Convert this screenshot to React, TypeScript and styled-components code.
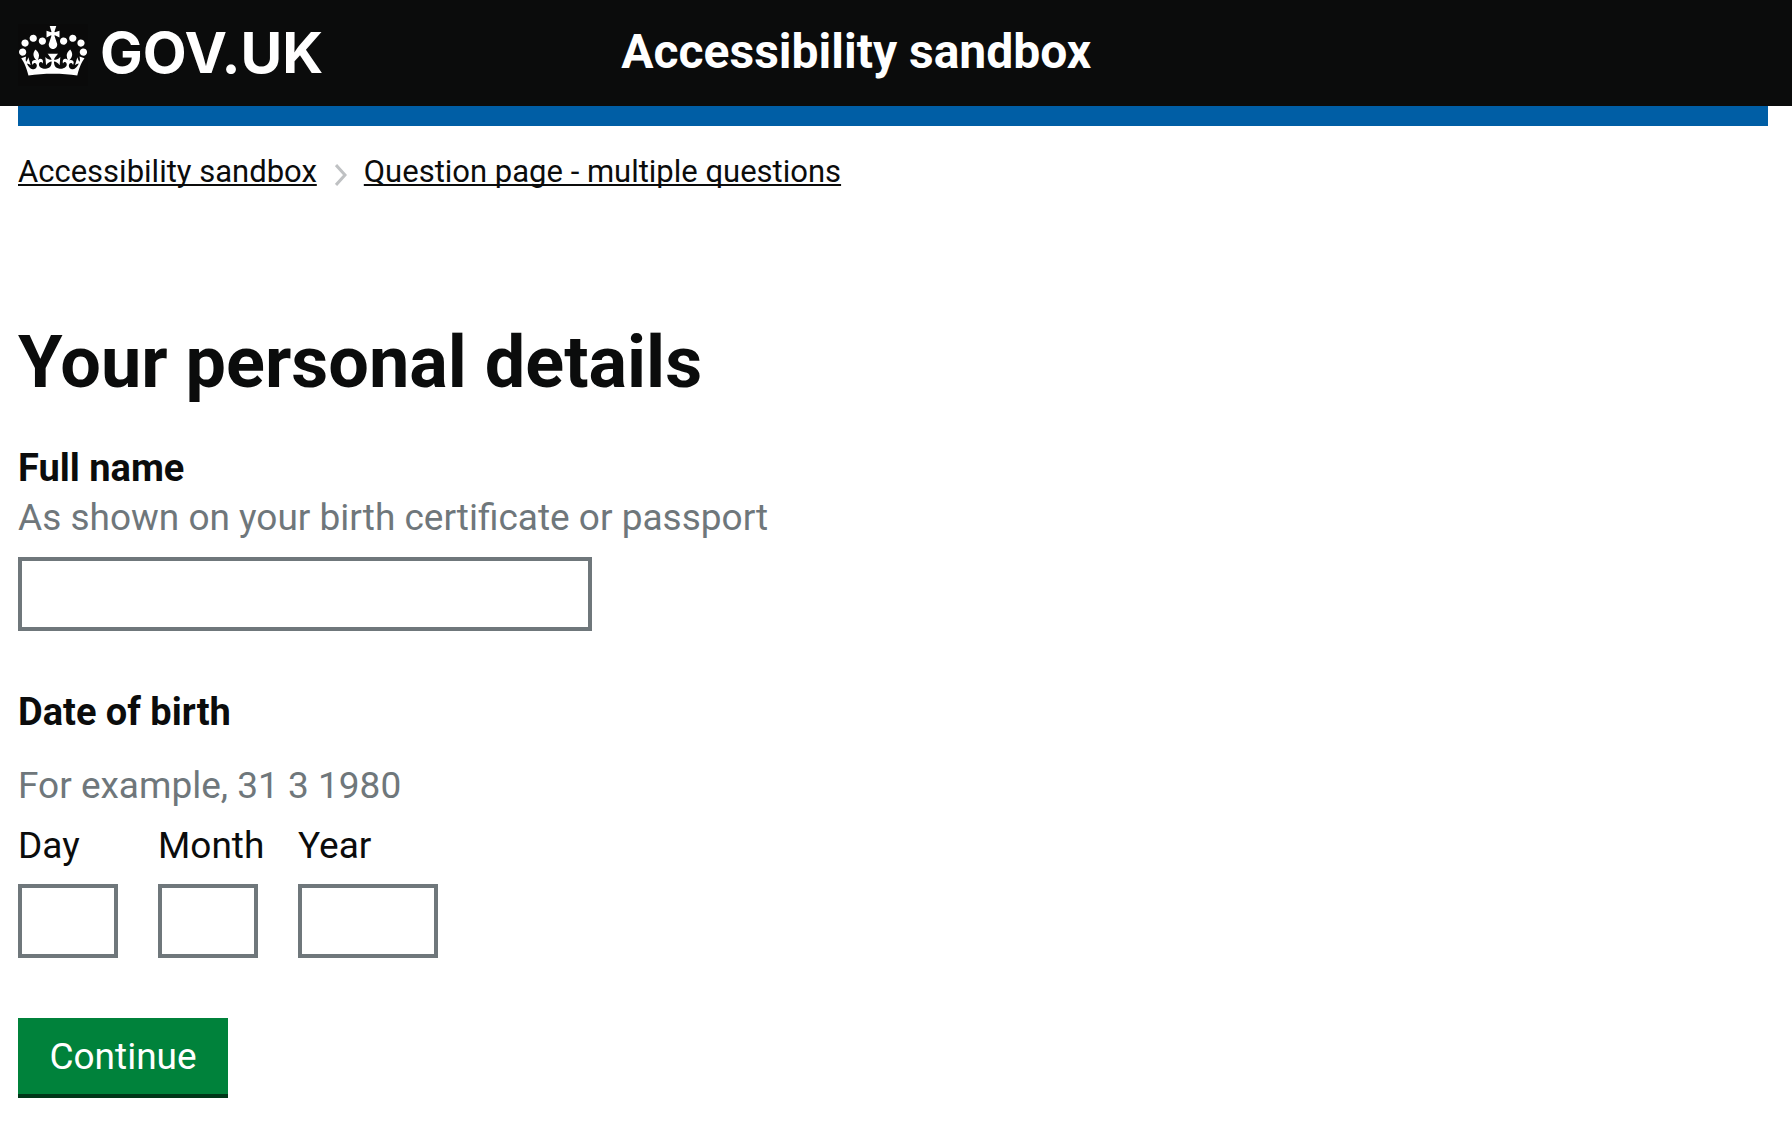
import React from "react";
import styled, { createGlobalStyle } from "styled-components";

const ink = "#0b0c0c";
const grey = "#6f777b";
const sans = 'Roboto, "Liberation Sans", Arial, sans-serif';

const GlobalStyle = createGlobalStyle`
  *, *::before, *::after { box-sizing: border-box; }
  body {
    margin: 0;
    background: #ffffff;
    color: ${ink};
    font-family: ${sans};
  }
`;

const Header = styled.header`
  background: ${ink};
  color: #ffffff;
`;

const Container = styled.div`
  margin: 0 24px 0 18px;
`;

const HeaderRow = styled(Container)`
  display: flex;
  align-items: flex-start;
  padding: 24px 0 20px;
`;

const LogoColumn = styled.div`
  flex: 0 0 calc(100% / 3);
`;

const LogoLink = styled.a`
  display: flex;
  align-items: flex-start;
  gap: 12px;
  width: fit-content;
  color: inherit;
  text-decoration: none;
`;

const Crown = styled.svg`
  width: 70px;
  height: 62px;
  padding: 2px 1px 10px;
  background: #0a0a0a;
  fill: currentColor;
`;

const LogoText = styled.span`
  font: 700 57px/58px Inter, ${sans};
`;

const ServiceColumn = styled.div`
  flex: 1;
  padding-left: 20px;
`;

const ServiceLink = styled.a`
  color: inherit;
  font-size: 48px;
  font-weight: 700;
  line-height: 56px;
  text-decoration: none;
`;

const BlueBar = styled(Container)`
  height: 20px;
  background: #005ea5;
`;

const Breadcrumbs = styled.nav`
  padding-top: 26px;
`;

const CrumbList = styled.ol`
  display: flex;
  flex-wrap: wrap;
  margin: 0;
  padding: 0;
  list-style: none;
`;

const Crumb = styled.li`
  display: flex;
  align-items: flex-end;
  font-size: 31px;
  line-height: 40px;
`;

const CrumbLink = styled.a`
  color: ${ink};
  text-decoration: underline;
  text-decoration-thickness: 2px;
  text-underline-offset: 2px;
  text-decoration-skip-ink: none;
`;

const Chevron = styled.svg`
  width: 12px;
  height: 22px;
  margin: 0 17px 6px 18px;
  fill: none;
  stroke: #bfc1c3;
  stroke-width: 3;
`;

const Main = styled.main`
  padding: 131px 0 34px;
`;

const Title = styled.h1`
  margin: 0 0 40px;
  font-size: 72px;
  font-weight: 700;
  line-height: 80px;
`;

const Group = styled.div`
  margin-bottom: 56px;
`;

const DateGroup = styled.fieldset`
  min-width: 0;
  margin: 0 0 60px;
  padding: 0;
  border: 0;
`;

const Label = styled.label<{ $bold?: boolean }>`
  display: block;
  font-size: ${(p) => (p.$bold ? 38 : 37)}px;
  font-weight: ${(p) => (p.$bold ? 700 : 400)};
  line-height: 50px;
  white-space: nowrap;
`;

const Legend = styled.legend`
  margin-bottom: 24px;
  padding: 0;
  font-size: 38px;
  font-weight: 700;
  line-height: 50px;
`;

const Hint = styled.div<{ $gap: number }>`
  margin-bottom: ${(p) => p.$gap}px;
  color: ${grey};
  font-size: 37px;
  line-height: 50px;
`;

const TextInput = styled.input`
  display: block;
  width: 100%;
  max-width: 574px;
  height: 74px;
  padding: 8px;
  border: 4px solid ${grey};
  border-radius: 0;
  background: #ffffff;
  color: ${ink};
  font: 400 37px/50px ${sans};
`;

const DateFields = styled.div`
  display: grid;
  grid-template-columns: 100px 100px 140px;
  column-gap: 40px;
`;

const DateField = styled.div`
  display: grid;
  grid-template-columns: minmax(0, 1fr);
  row-gap: 13px;
`;

const Button = styled.button`
  display: block;
  min-width: 210px;
  padding: 14px 30px 12px;
  border: 0;
  border-bottom: 4px solid #003618;
  border-radius: 0;
  background: #00823b;
  color: #ffffff;
  font: 400 37px/50px ${sans};
  cursor: pointer;
`;

const dateParts = [
  { id: "dob-day", label: "Day" },
  { id: "dob-month", label: "Month" },
  { id: "dob-year", label: "Year" },
];

export default function App() {
  return (
    <>
      <GlobalStyle />
      <Header>
        <HeaderRow>
          <LogoColumn>
            <LogoLink href="#">
              <Crown viewBox="0 0 132 97" aria-hidden="true">
                <path
                  fillRule="evenodd"
                  d="M25 30.2c3.5 1.5 7.7-.2 9.1-3.7 1.5-3.6-.2-7.8-3.9-9.2-3.6-1.4-7.6.3-9.1 3.9-1.4 3.5.3 7.5 3.9 9zM9 39.5c3.6 1.5 7.8-.2 9.2-3.7 1.5-3.6-.2-7.8-3.9-9.1-3.6-1.5-7.6.2-9.1 3.8-1.4 3.5.3 7.5 3.8 9zM4.4 57.2c3.5 1.5 7.7-.2 9.1-3.8 1.5-3.6-.2-7.7-3.9-9.1-3.5-1.5-7.6.3-9.1 3.8-1.4 3.5.3 7.6 3.9 9.1zm38.3-21.4c3.5 1.5 7.7-.2 9.1-3.8 1.5-3.6-.2-7.7-3.9-9.1-3.6-1.5-7.6.3-9.1 3.8-1.3 3.6.4 7.7 3.9 9.1zm64.4-5.6c-3.6 1.5-7.8-.2-9.1-3.7-1.5-3.6.2-7.8 3.8-9.2 3.6-1.4 7.7.3 9.2 3.9 1.3 3.5-.4 7.5-3.9 9zm15.9 9.3c-3.6 1.5-7.7-.2-9.1-3.7-1.5-3.6.2-7.8 3.7-9.1 3.6-1.5 7.7.2 9.2 3.8 1.5 3.5-.3 7.5-3.8 9zm4.7 17.7c-3.6 1.5-7.8-.2-9.2-3.8-1.5-3.6.2-7.7 3.9-9.1 3.6-1.5 7.7.3 9.2 3.8 1.3 3.5-.4 7.6-3.9 9.1zM89.3 35.8c-3.6 1.5-7.8-.2-9.2-3.8-1.4-3.6.2-7.7 3.9-9.1 3.6-1.5 7.7.3 9.2 3.8 1.4 3.6-.3 7.7-3.9 9.1zM69.7 17.7l8.9 4.7V9.3l-8.9 2.8c-.2-.3-.5-.6-.9-.9L72.4 0H59.6l3.5 11.2c-.3.3-.6.5-.9.9l-8.8-2.8v13.1l8.8-4.7c.3.3.6.7.9.9l-5 15.4v.1c-.2.8-.4 1.6-.4 2.4 0 4.1 3.1 7.5 7 8.1h.2c.3 0 .7.1 1 .1.4 0 .7 0 1-.1h.2c4-.6 7.1-4.1 7.1-8.1 0-.8-.1-1.7-.4-2.4V34l-5.1-15.4c.4-.2.7-.6 1-.9zM66 92.8c16.9 0 32.8 1.1 47.1 3.2 4-16.9 8.9-26.7 14-33.5l-9.6-3.4c1 4.9 1.1 7.2 0 10.2-1.5-1.4-3-4.3-4.2-8.7L108.6 76c2.8-2 5-3.2 7.5-3.3-4.4 9.4-10 11.9-13.6 11.2-4.3-.8-6.3-4.6-5.6-7.9 1-4.7 5.7-5.9 8-.5 4.3-8.7-3-11.4-7.6-8.8 7.1-7.2 7.9-13.5 2.1-21.1-8 6.1-8.1 12.3-4.5 20.8-4.7-5.4-12.1-2.5-9.5 6.2 3.4-5.2 7.9-2 7.2 3.1-.6 4.3-6.4 7.8-13.5 7.2-10.3-.9-10.9-8-11.2-13.8 2.5-.5 7.1 1.8 11 7.3L80.2 60c-4.1 4.4-8 5.3-12.3 5.4 1.4-4.4 8-11.6 8-11.6H55.5s6.4 7.2 7.9 11.6c-4.2-.1-8-1-12.3-5.4l1.4 16.4c3.9-5.5 8.5-7.7 10.9-7.3-.3 5.8-.9 12.8-11.1 13.8-7.2.6-12.9-2.9-13.5-7.2-.7-5 3.8-8.3 7.1-3.1 2.7-8.7-4.6-11.6-9.4-6.2 3.7-8.5 3.6-14.7-4.6-20.8-5.8 7.6-5 13.9 2.2 21.1-4.7-2.6-11.9.1-7.7 8.8 2.3-5.5 7.1-4.2 8.1.5.7 3.3-1.3 7.1-5.7 7.9-3.5.7-9-1.8-13.5-11.2 2.5.1 4.7 1.3 7.5 3.3l-4.7-15.4c-1.2 4.4-2.7 7.2-4.3 8.7-1.1-3-.9-5.3 0-10.2l-9.5 3.4c5 6.9 9.9 16.7 14 33.5 14.8-2.1 30.8-3.2 47.7-3.2z"
                />
              </Crown>
              <LogoText>GOV.UK</LogoText>
            </LogoLink>
          </LogoColumn>
          <ServiceColumn>
            <ServiceLink href="#">Accessibility sandbox</ServiceLink>
          </ServiceColumn>
        </HeaderRow>
      </Header>
      <BlueBar />
      <Container>
        <Breadcrumbs>
          <CrumbList>
            <Crumb>
              <CrumbLink href="#">Accessibility sandbox</CrumbLink>
            </Crumb>
            <Crumb>
              <Chevron viewBox="0 0 12 22" aria-hidden="true">
                <path d="M1 1l9 10-9 10" />
              </Chevron>
              <CrumbLink href="#">Question page - multiple questions</CrumbLink>
            </Crumb>
          </CrumbList>
        </Breadcrumbs>
        <Main>
          <Title>Your personal details</Title>
          <form>
            <Group>
              <Label $bold htmlFor="full-name">
                Full name
              </Label>
              <Hint $gap={14} id="full-name-hint">
                As shown on your birth certificate or passport
              </Hint>
              <TextInput id="full-name" type="text" aria-describedby="full-name-hint" />
            </Group>
            <DateGroup aria-describedby="dob-hint">
              <Legend>Date of birth</Legend>
              <Hint $gap={10} id="dob-hint">
                For example, 31 3 1980
              </Hint>
              <DateFields>
                {dateParts.map((part) => (
                  <DateField key={part.id}>
                    <Label htmlFor={part.id}>{part.label}</Label>
                    <TextInput id={part.id} type="text" inputMode="numeric" />
                  </DateField>
                ))}
              </DateFields>
            </DateGroup>
            <Button type="button">Continue</Button>
          </form>
        </Main>
      </Container>
    </>
  );
}
